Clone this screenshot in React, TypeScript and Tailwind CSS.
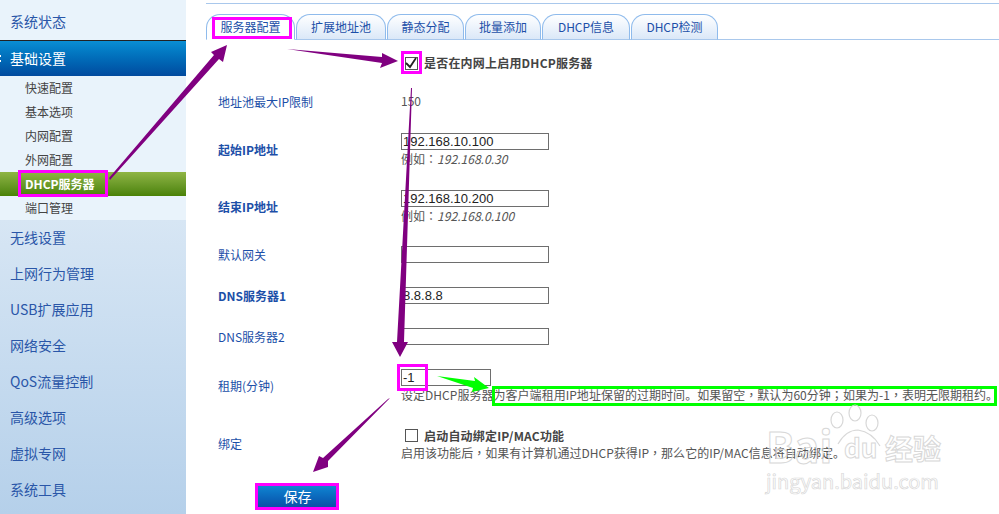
import React from "react";

const font = "font-['Noto_Sans_CJK_SC','Noto_Sans',sans-serif]";

function Nav({ label }: { label: string }) {
  return <div className="h-9 flex items-center pl-[10px] pb-[2px] text-sm text-[#2a56a8]">{label}</div>;
}

function Sub({ label }: { label: string }) {
  return <div className="h-6 flex items-center pl-[25px] text-xs text-[#444]">{label}</div>;
}

function Tab({ label, w, active }: { label: string; w: string; active?: boolean }) {
  return (
    <div
      className={`${w} h-[26px] -mb-px flex items-center justify-center text-xs text-[#1c4fa8] border border-[#8fbbec] rounded-t-[14px] ${
        active ? "bg-white border-b-white" : "bg-gradient-to-b from-white to-[#dbe8f8] border-b-[#a9c8ec]"
      }`}
    >
      {label}
    </div>
  );
}

function Row({
  label,
  bold,
  h,
  mt,
  children,
}: {
  label?: string;
  bold?: boolean;
  h: string;
  mt: string;
  children: React.ReactNode;
}) {
  return (
    <div className={`flex items-center ${h} ${mt}`}>
      <div className={`w-[183px] text-xs text-[#1c4fa8] ${bold ? "font-bold" : ""}`}>{label}</div>
      <div className="flex-1 min-w-0">{children}</div>
    </div>
  );
}

function Field({ value, w = "w-[148px]" }: { value?: string; w?: string }) {
  return (
    <div className={`${w} h-[17px] border border-[#6e6e6e] bg-white pl-px flex items-center font-['Liberation_Sans',sans-serif] text-[13px] text-[#222]`}>
      {value}
    </div>
  );
}

function Hint({ children }: { children: React.ReactNode }) {
  return <div className="text-xs leading-[17px] tracking-[0.03px] text-[#555] whitespace-nowrap">{children}</div>;
}

function P({ children }: { children: string }) {
  return <span className="font-['Noto_Sans_CJK_TC',sans-serif]">{children}</span>;
}

function Overlay() {
  return (
    <svg className="absolute left-0 top-0 pointer-events-none" width="999" height="514" viewBox="0 0 999 514">
      <rect x="0" y="55" width="1" height="2" fill="#fff" />
      <rect x="0" y="60" width="1" height="2" fill="#fff" />
      <polygon fill="#800080" points="109,178 214,55 211,52 227,45 223,62 219,59 110,180" />
      <polygon fill="#800080" points="287,49 382,57 382,53 398,61 380,68 382,63" />
      <polygon fill="#800080" points="411,88 412,88 404,342 408,342 400,357 392,342 397,342" />
      <polygon fill="#00ff00" points="437,376 475,381 474,377 489,388 472,392 473,388" />
      <polygon fill="#800080" points="390,398 328,461 328,467 313,472 319,456 323,458 388,399" />
      <path d="M406 63 L410 67 L416 58" fill="none" stroke="#222" strokeWidth="1.8" />
      {/* watermark paw */}
      <g fill="none" stroke="#d8d8d8" strokeWidth="1.2">
        <ellipse cx="837" cy="420" rx="6" ry="8" />
        <ellipse cx="855" cy="413" rx="6" ry="8" />
        <ellipse cx="872" cy="423" rx="6" ry="8" />
        <path d="M838 444 Q846 430 858 430 Q872 432 880 446" />
      </g>
    </svg>
  );
}

export default function App() {
  return (
    <div className={`relative w-[999px] h-[514px] overflow-hidden bg-white flex ${font}`}>
      <aside className="w-[186px] shrink-0 flex flex-col">
        <div className="h-10 flex items-center pl-[10px] pt-[2px] text-sm text-[#2a56a8] bg-[#e9f3fb]">系统状态</div>
        <div className="h-9 border-t border-[#222] bg-gradient-to-b from-[#0a8ed3] to-[#024a9e] flex items-center pl-[10px] pb-[2px] text-sm text-white">
          基础设置
        </div>
        <div className="bg-[#e9f3fb]">
          <Sub label="快速配置" />
          <Sub label="基本选项" />
          <Sub label="内网配置" />
          <Sub label="外网配置" />
          <div className="h-6 flex items-center pl-[25px] text-xs font-bold text-white bg-gradient-to-b from-[#8fb544] to-[#4a8205]">
            DHCP服务器
          </div>
          <Sub label="端口管理" />
        </div>
        <div className="flex-1 bg-gradient-to-b from-[#d7e6f4] to-[#b5d0ea]">
          <Nav label="无线设置" />
          <Nav label="上网行为管理" />
          <Nav label="USB扩展应用" />
          <Nav label="网络安全" />
          <Nav label="QoS流量控制" />
          <Nav label="高级选项" />
          <Nav label="虚拟专网" />
          <Nav label="系统工具" />
        </div>
      </aside>

      <main className="flex-1 min-w-0 pl-5 pt-[3px]">
        <div className="h-px bg-[#a9c8ec]" />
        <div className="flex gap-px pt-[10px] border-b border-[#a9c8ec]">
          <Tab label="服务器配置" w="w-[89px]" active />
          <Tab label="扩展地址池" w="w-[90px]" />
          <Tab label="静态分配" w="w-[77px]" />
          <Tab label="批量添加" w="w-[76px]" />
          <Tab label="DHCP信息" w="w-[88px]" />
          <Tab label="DHCP检测" w="w-[87px]" />
        </div>

        <div className="pl-3">
          <Row h="h-[22px]" mt="mt-3">
            <div className="flex items-center gap-[6px] text-xs font-bold tracking-[0.2px] text-[#444]">
              <span className="ml-1 w-[13px] h-[13px] border border-[#555] bg-white" />
              是否在内网上启用DHCP服务器
            </div>
          </Row>
          <Row label="地址池最大IP限制" h="h-[22px]" mt="mt-[17px]">
            <span className="block -mt-[3px] text-xs text-[#555]">150</span>
          </Row>
          <Row label="起始IP地址" bold h="h-[34px]" mt="mt-5">
            <Field value="192.168.10.100" />
            <Hint>
              例如<P>：</P><i>192.168.0.30</i>
            </Hint>
          </Row>
          <Row label="结束IP地址" bold h="h-[34px]" mt="mt-[23px]">
            <Field value="192.168.10.200" />
            <Hint>
              例如<P>：</P><i>192.168.0.100</i>
            </Hint>
          </Row>
          <Row label="默认网关" h="h-[17px]" mt="mt-[22px]">
            <Field />
          </Row>
          <Row label="DNS服务器1" bold h="h-[17px]" mt="mt-6">
            <Field value="8.8.8.8" />
          </Row>
          <Row label="DNS服务器2" h="h-[17px]" mt="mt-6">
            <Field />
          </Row>
          <Row label="租期(分钟)" h="h-[34px]" mt="mt-6">
            <Field value="-1" w="w-[90px]" />
            <Hint>
              设定DHCP服务器为客户端租用IP地址保留的过期时间。如果留空<P>，</P>默认为60分钟<P>；</P>如果为-1<P>，</P>表明无限期租约。
            </Hint>
          </Row>
          <Row label="绑定" h="h-[34px]" mt="mt-6">
            <div className="flex items-center gap-[6px] text-xs font-bold tracking-[0.2px] text-[#444]">
              <span className="ml-[4px] w-[13px] h-[13px] border border-[#555] bg-white" />
              启动自动绑定IP/MAC功能
            </div>
            <Hint>
              启用该功能后<P>，</P>如果有计算机通过DHCP获得IP<P>，</P>那么它的IP/MAC信息将自动绑定。
            </Hint>
          </Row>
          <div className="ml-10 mt-[23px] w-[79px] h-[23px] flex items-center justify-center text-sm text-white bg-gradient-to-b from-[#118ad6] to-[#0b4fa8]">
            保存
          </div>
        </div>
      </main>

      <div className="absolute left-[212px] top-[17px] w-[80px] h-[22px] border-[3px] border-[#ff00ff]" />
      <div className="absolute left-[401px] top-[51px] w-[21px] h-[23px] border-[3px] border-[#ff00ff]" />
      <div className="absolute left-[18px] top-[170px] w-[90px] h-[27px] border-[3px] border-[#ff00ff]" />
      <div className="absolute left-[397px] top-[364px] w-[31px] h-[27px] border-[3px] border-[#ff00ff]" />
      <div className="absolute left-[255px] top-[483px] w-[84px] h-[27px] border-[3px] border-[#ff00ff]" />
      <div className="absolute left-[492px] top-[386px] w-[505px] h-[20px] border-[3px] border-[#00ff00]" />

      <Overlay />

      <div className="absolute left-[766px] top-[423px] text-[42px] leading-[44px] font-bold text-transparent [-webkit-text-stroke:1px_#d8d8d8]">
        Bai
      </div>
      <div className="absolute left-[844px] top-[433px] text-[26px] leading-[28px] font-bold text-transparent [-webkit-text-stroke:1px_#d8d8d8]">
        du
      </div>
      <div className="absolute left-[885px] top-[432px] text-[28px] leading-[32px] font-bold text-transparent [-webkit-text-stroke:1px_#d8d8d8]">
        经验
      </div>
      <div className="absolute left-[766px] top-[469px] text-[20px] leading-[24px] text-transparent [-webkit-text-stroke:0.7px_#d8d8d8]">
        jingyan.baidu.com
      </div>
    </div>
  );
}
